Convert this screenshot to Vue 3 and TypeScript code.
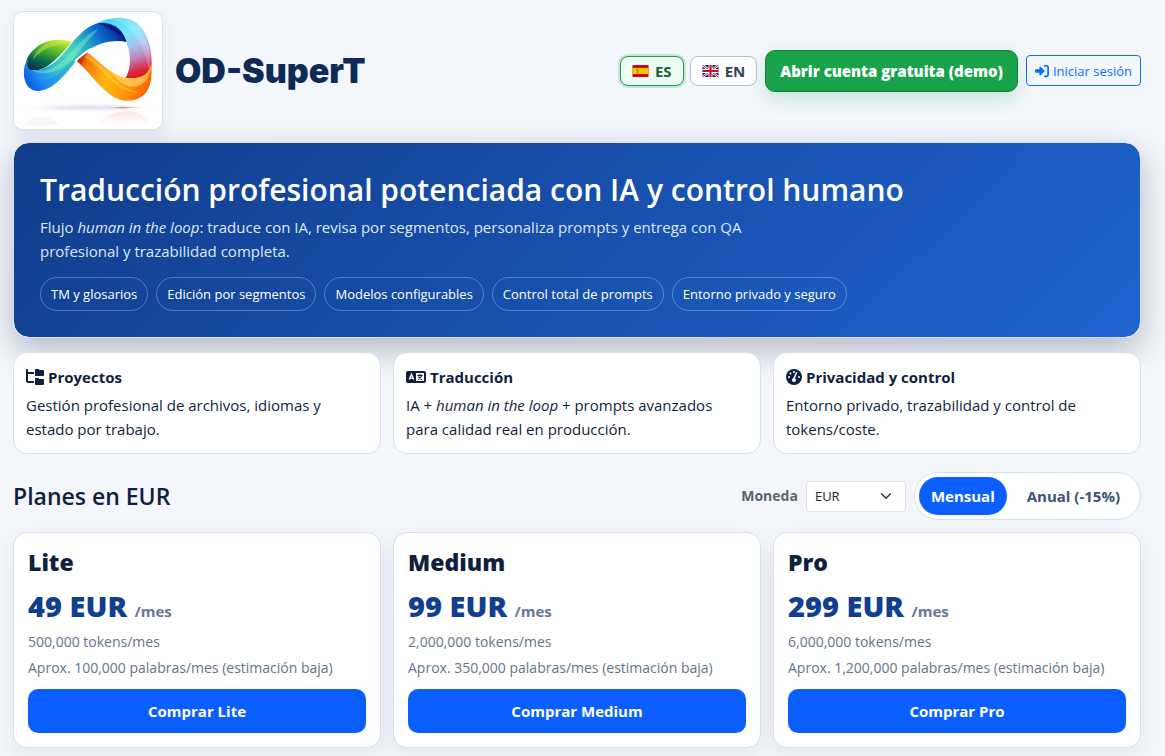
<script setup lang="ts">
import { computed, ref } from 'vue'

type Billing = 'monthly' | 'yearly'

interface Plan {
  name: string
  price: number
  tokens: string
  words: string
}

const lang = ref('es')
const currency = ref('EUR')
const billing = ref<Billing>('monthly')

const chips: string[] = [
  'TM y glosarios',
  'Edición por segmentos',
  'Modelos configurables',
  'Control total de prompts',
  'Entorno privado y seguro',
]

const plans: Plan[] = [
  { name: 'Lite', price: 49, tokens: '500,000', words: '100,000' },
  { name: 'Medium', price: 99, tokens: '2,000,000', words: '350,000' },
  { name: 'Pro', price: 299, tokens: '6,000,000', words: '1,200,000' },
]

const factor = computed(() => (billing.value === 'yearly' ? 0.85 : 1))
const priceOf = (plan: Plan): string => String(Math.round(plan.price * factor.value))
</script>

<template>
  <div class="page">
    <header class="top">
      <div class="brand">
        <div class="logo">
          <svg viewBox="12 12 444 351" role="img" aria-label="OD-SuperT">
            <defs>
              <linearGradient id="leaf" x1="0.75" y1="0" x2="0.2" y2="1">
                <stop offset="0" stop-color="#c8e62c" />
                <stop offset="0.4" stop-color="#3fae35" />
                <stop offset="0.7" stop-color="#0b6a4a" />
                <stop offset="1" stop-color="#032c40" />
              </linearGradient>
              <linearGradient id="wave" gradientUnits="userSpaceOnUse" x1="60" y1="250" x2="330" y2="60">
                <stop offset="0" stop-color="#0a43dc" />
                <stop offset="0.14" stop-color="#1c8ff5" />
                <stop offset="0.34" stop-color="#3ac6c4" />
                <stop offset="0.5" stop-color="#4fdab4" />
                <stop offset="0.66" stop-color="#25acc8" />
                <stop offset="0.82" stop-color="#0c66c8" />
                <stop offset="1" stop-color="#04208c" />
              </linearGradient>
              <linearGradient id="arc" gradientUnits="userSpaceOnUse" x1="330" y1="28" x2="385" y2="212">
                <stop offset="0" stop-color="#4fd6f6" />
                <stop offset="0.25" stop-color="#72e8fd" />
                <stop offset="0.48" stop-color="#a9c3ee" />
                <stop offset="0.68" stop-color="#bf83bd" />
                <stop offset="0.86" stop-color="#dc3048" />
                <stop offset="1" stop-color="#e01010" />
              </linearGradient>
              <linearGradient id="flame" gradientUnits="userSpaceOnUse" x1="200" y1="145" x2="425" y2="240">
                <stop offset="0" stop-color="#d62a05" />
                <stop offset="0.16" stop-color="#f77a08" />
                <stop offset="0.45" stop-color="#fdb813" />
                <stop offset="0.7" stop-color="#ff9a0c" />
                <stop offset="1" stop-color="#fb5a02" />
              </linearGradient>
              <radialGradient id="floor">
                <stop offset="0" stop-color="#a79fc8" stop-opacity="0.4" />
                <stop offset="0.5" stop-color="#b9c0ea" stop-opacity="0.28" />
                <stop offset="1" stop-color="#dde2fa" stop-opacity="0" />
              </radialGradient>
              <radialGradient id="spot">
                <stop offset="0" stop-color="#a13a2a" stop-opacity="0.6" />
                <stop offset="1" stop-color="#e6b0a0" stop-opacity="0" />
              </radialGradient>
              <linearGradient id="mirror" x1="0" y1="0" x2="0" y2="1">
                <stop offset="0" stop-color="#fbdcd2" stop-opacity="0.7" />
                <stop offset="1" stop-color="#fdeee8" stop-opacity="0.2" />
              </linearGradient>
            </defs>
            <ellipse cx="235" cy="299" rx="200" ry="13" fill="url(#floor)" />
            <ellipse cx="340" cy="299" rx="60" ry="4" fill="url(#spot)" />
            <path d="M258 350C290 318 322 309 352 309c34 0 54 14 72 41z" fill="url(#mirror)" />
            <path d="M48 350c14-20 28-26 44-25 24 2 40 12 56 25z" fill="#eef1f9" opacity="0.6" />
            <path d="M185 103C152 91 106 94 78 119 50 140 42 165 55 183c8 7 28 6 46-2 28-14 54-44 84-78z" fill="url(#leaf)" />
            <path d="M180 106c-42-2-86 18-112 50 8-30 34-54 70-58 16-2 30 0 42 8z" fill="#d9f23a" opacity="0.45" />
            <path d="M225 72C262 30 345 12 385 50c30 28 41 76 40 118-2 32-36 48-78 41 18-30 16-72 2-107-14-34-44-60-78-57z" fill="url(#arc)" />
            <path d="M300 34c60 6 104 70 117 156 12-48-2-102-33-140-24-20-56-24-84-16z" fill="#fff" opacity="0.2" />
            <path d="M232 134c34 22 66 66 116 76 44 6 70-10 76-44 6 72-16 112-72 112-60 0-100-74-155-123 12-3 24-11 35-21z" fill="url(#flame)" />
            <path d="M235 138c44 34 74 86 120 106 30 12 48 10 62 0-20 14-54 14-86-8-44-28-68-66-108-90z" fill="#ffe14a" opacity="0.4" />
            <path d="M300 186c18 14 34 22 48 24 44 6 70-10 76-44-2 44-22 66-48 70-36 2-54-20-76-50z" fill="#ffdf70" opacity="0.6" />
            <path d="M232 134l-35 21 20 20c-2-12 4-26 15-41z" fill="#c91c05" opacity="0.6" />
            <path d="M190 98c-34 44-64 80-104 94 38 2 84-34 114-78z" fill="#fff" />
            <path d="M57 148C47 168 52 184 66 187c34 2 66-18 92-48 40-48 72-92 116-94 40-2 66 22 75 57-40-8-86 2-124 32C186 164 144 246 84 249c-36 0-48-42-40-74 3-12 8-20 13-27z" fill="url(#wave)" />
            <path d="M262 46c44-4 76 18 87 56-28-28-50-44-87-56z" fill="#020f75" opacity="0.75" />
            <path d="M66 187c46 10 82-14 116-52 26-28 52-62 84-72-24 24-44 50-70 80-40 46-88 66-130 44z" fill="#8cf5d2" opacity="0.4" />
            <path d="M45 176c4 42 36 54 76 34 36-18 66-54 98-80-40 50-76 114-132 118-32 2-50-26-42-72z" fill="#127bf0" opacity="0.32" />
            <path d="M243 122c-18 10-34 24-48 38" fill="none" stroke="#fff" stroke-width="5" />
          </svg>
        </div>
        <div class="name">OD-SuperT</div>
      </div>
      <nav class="actions" aria-label="Cuenta">
        <button class="lang" :class="{ on: lang === 'es' }" type="button" @click="lang = 'es'">
          <svg class="flag" viewBox="0 0 16 12" aria-hidden="true">
            <path fill="#c60b1e" d="M0 0h16v12H0z" />
            <path fill="#ffc400" d="M0 3h16v6H0z" />
            <path fill="#c67a28" d="M4 4h2v4H4z" />
          </svg>
          ES
        </button>
        <button class="lang" :class="{ on: lang === 'en' }" type="button" @click="lang = 'en'">
          <svg class="flag" viewBox="0 0 16 12" aria-hidden="true">
            <path fill="#012169" d="M0 0h16v12H0z" />
            <path stroke="#fff" stroke-width="2.4" d="M0 0l16 12M16 0L0 12" />
            <path stroke="#c8102e" stroke-width="1" d="M0 0l16 12M16 0L0 12" />
            <path stroke="#fff" stroke-width="4" d="M8 0v12M0 6h16" />
            <path stroke="#c8102e" stroke-width="2.2" d="M8 0v12M0 6h16" />
          </svg>
          EN
        </button>
        <a class="demo" href="#demo">Abrir cuenta gratuita (demo)</a>
        <a class="login" href="#login">
          <svg class="ico" viewBox="0 0 512 512" aria-hidden="true">
            <path d="M217.900 105.900L340.700 228.700c7.200 7.200 11.300 17.100 11.300 27.300s-4.100 20.100-11.300 27.300L217.900 406.100c-6.400 6.400-15 9.900-24 9.900c-18.700 0-33.900-15.200-33.900-33.900l0-62.100L32 320c-17.700 0-32-14.300-32-32l0-64c0-17.700 14.300-32 32-32l128 0 0-62.100c0-18.700 15.200-33.900 33.900-33.900c9 0 17.600 3.600 24 9.900zM352 416l64 0c17.700 0 32-14.300 32-32l0-256c0-17.700-14.300-32-32-32l-64 0c-17.700 0-32-14.300-32-32s14.300-32 32-32l64 0c53 0 96 43 96 96l0 256c0 53-43 96-96 96l-64 0c-17.700 0-32-14.300-32-32s14.300-32 32-32z" />
          </svg>
          Iniciar sesión
        </a>
      </nav>
    </header>

    <section class="hero">
      <h1>Traducción profesional potenciada con IA y control humano</h1>
      <p>
        Flujo <em>human in the loop</em>: traduce con IA, revisa por segmentos, personaliza prompts y entrega con QA
        profesional y trazabilidad completa.
      </p>
      <ul class="chips">
        <li v-for="chip in chips" :key="chip">{{ chip }}</li>
      </ul>
    </section>

    <section class="grid features">
      <article class="feature">
        <h2>
          <svg class="ico tree" viewBox="0 0 576 512" aria-hidden="true">
            <path d="M64 32C64 14.300 49.700 0 32 0S0 14.300 0 32v96V384c0 35.300 28.700 64 64 64H256V384H64V160H256V96H64V32zM288 192c0 17.700 14.300 32 32 32H544c17.700 0 32-14.300 32-32V64c0-17.700-14.300-32-32-32H445.300c-8.500 0-16.600-3.400-22.600-9.400L409.400 9.400c-6-6-14.100-9.400-22.600-9.400H320c-17.700 0-32 14.300-32 32V192zm0 288c0 17.700 14.300 32 32 32H544c17.700 0 32-14.300 32-32V352c0-17.700-14.300-32-32-32H445.300c-8.500 0-16.600-3.400-22.600-9.400l-13.300-13.300c-6-6-14.100-9.400-22.600-9.400H320c-17.700 0-32 14.300-32 32V480z" />
          </svg>
          Proyectos
        </h2>
        <p>Gestión profesional de archivos, idiomas y<br />estado por trabajo.</p>
      </article>
      <article class="feature">
        <h2>
          <svg class="ico wide" viewBox="0 0 640 512" aria-hidden="true">
            <path fill-rule="evenodd" d="M64 64h512c35 0 64 29 64 64v256c0 35-29 64-64 64H64c-35 0-64-29-64-64V128c0-35 29-64 64-64zM320 128v256h256V128z" />
            <path class="cut" d="M104 336l72-164 72 164M130 290h92" />
            <path class="pen" d="M364 204h168M448 166v38M500 204c-16 60-62 110-118 136M398 240c24 44 62 78 118 100" />
          </svg>
          Traducción
        </h2>
        <p>IA + <em>human in the loop</em> + prompts avanzados<br />para calidad real en producción.</p>
      </article>
      <article class="feature">
        <h2>
          <svg class="ico" viewBox="0 0 512 512" aria-hidden="true">
            <circle cx="256" cy="256" r="256" />
            <g class="holes">
              <circle cx="256" cy="96" r="32" />
              <circle cx="144" cy="144" r="32" />
              <circle cx="96" cy="256" r="32" />
              <circle cx="416" cy="256" r="32" />
              <circle cx="256" cy="352" r="64" />
              <path d="M325 98c12-6 26-1 32 11s2 24-3 33l-80 176-44-20 80-180c4-10 8-17 15-20z" />
            </g>
          </svg>
          Privacidad y control
        </h2>
        <p>Entorno privado, trazabilidad y control de<br />tokens/coste.</p>
      </article>
    </section>

    <section class="bar">
      <h2>Planes en {{ currency }}</h2>
      <div class="controls">
        <label for="currency">Moneda</label>
        <div class="select">
          <select id="currency" v-model="currency">
            <option>EUR</option>
            <option>USD</option>
          </select>
          <svg viewBox="0 0 16 16" aria-hidden="true"><path d="M2 5l6 6 6-6" /></svg>
        </div>
        <div class="toggle">
          <button type="button" :class="{ on: billing === 'monthly' }" @click="billing = 'monthly'">Mensual</button>
          <button type="button" :class="{ on: billing === 'yearly' }" @click="billing = 'yearly'">Anual (-15%)</button>
        </div>
      </div>
    </section>

    <section class="grid">
      <article v-for="plan in plans" :key="plan.name" class="plan">
        <h3>{{ plan.name }}</h3>
        <div class="price">{{ priceOf(plan) }} {{ currency }} <small>/mes</small></div>
        <p>{{ plan.tokens }} tokens/mes</p>
        <p>Aprox. {{ plan.words }} palabras/mes (estimación baja)</p>
        <button class="buy" type="button">Comprar {{ plan.name }}</button>
      </article>
    </section>
  </div>
</template>

<style>
body {
  margin: 0;
  background: #f3f6fb;
}
</style>

<style scoped>
.page {
  box-sizing: border-box;
  padding: 11px 24px 24px 13px;
  overflow: hidden;
  color: #0f1f3d;
  font: 15px/24px 'Segoe UI', 'Open Sans', 'Noto Sans', sans-serif;
}
.page * {
  box-sizing: border-box;
}
h1,
h2,
h3,
p,
ul {
  margin: 0;
  padding: 0;
}
button,
select {
  font: inherit;
  cursor: pointer;
}
a {
  text-decoration: none;
}
.top,
.brand,
.actions,
.bar,
.controls {
  display: flex;
  align-items: center;
}
.top,
.bar {
  justify-content: space-between;
}
.brand {
  gap: 12px;
}
.logo {
  width: 150px;
  border: 1px solid #d7e0f0;
  border-radius: 10px;
  background: #fff;
  box-shadow: 0 6px 16px rgba(15, 43, 91, 0.08);
}
.logo svg {
  display: block;
  width: 100%;
}
.name {
  color: #0e2a57;
  font: 900 34px/40px Inter, sans-serif;
}
.actions {
  gap: 8px;
}
.lang {
  display: flex;
  align-items: center;
  gap: 6px;
  height: 30px;
  padding: 0 11px;
  border: 1px solid #b6c0d2;
  border-radius: 8px;
  background: #fff;
  color: #334155;
  font-size: 15px;
  font-weight: 700;
}
.lang + .lang {
  margin-left: -2px;
}
.lang.on {
  border-color: #16a34a;
  background: #ecfdf3;
  color: #166534;
  box-shadow: 0 0 0 2px rgba(22, 163, 74, 0.2);
}
.flag {
  width: 17px;
  height: 12px;
}
.demo {
  padding: 8px 14px;
  border: 1px solid #15803d;
  border-radius: 10px;
  background: #18a34a;
  color: #fff;
  font-weight: 800;
  box-shadow: 0 8px 18px rgba(22, 163, 74, 0.18);
}
.login {
  display: flex;
  align-items: center;
  gap: 4px;
  height: 31px;
  padding: 0 8px;
  border: 1px solid #0d6efd;
  border-radius: 4px;
  color: #0d6efd;
  font-size: 13px;
}
.ico {
  width: 16px;
  height: 16px;
  fill: currentColor;
}
.login .ico {
  width: 14px;
  height: 14px;
}
.hero {
  margin-top: 12px;
  padding: 28px 26px 26px;
  border: 1px solid #d7e0f0;
  border-radius: 16px;
  background: linear-gradient(135deg, #113d8b, #1e63cf) padding-box;
  color: #fff;
  box-shadow: 0 12px 32px rgba(15, 23, 60, 0.27);
}
.hero h1 {
  font-size: 30px;
  font-weight: 600;
  line-height: 38px;
}
.hero p {
  max-width: 740px;
  margin-top: 6px;
  color: #dfe7f5;
  font-weight: 500;
}
.chips {
  display: flex;
  flex-wrap: wrap;
  gap: 8px;
  margin-top: 14px;
  list-style: none;
}
.chips li {
  padding: 5px 10px;
  border: 1px solid rgba(255, 255, 255, 0.28);
  border-radius: 17px;
  font-size: 13px;
  line-height: 22px;
}
.grid {
  display: grid;
  grid-template-columns: repeat(3, minmax(0, 1fr));
  gap: 12px;
}
.features {
  margin-top: 14px;
}
.feature {
  padding: 12px;
  border: 1px solid #d7e0f0;
  border-radius: 14px;
  background: #fff;
}
.feature h2 {
  display: flex;
  align-items: center;
  gap: 4px;
  font-size: 15px;
  font-weight: 700;
  line-height: 24px;
}
.feature p {
  margin-top: 4px;
}
.tree {
  width: 18px;
}
.wide {
  width: 20px;
}
.cut,
.pen {
  fill: none;
  stroke: #fff;
  stroke-width: 44;
}
.pen {
  stroke: currentColor;
  stroke-width: 36;
}
.holes {
  fill: #fff;
}
.bar {
  margin-top: 18px;
}
.bar h2 {
  font-size: 23px;
  font-weight: 600;
  line-height: 32px;
}
.controls {
  gap: 8px;
}
.controls label {
  color: #5b6470;
  font-size: 14px;
  font-weight: 700;
}
.select {
  position: relative;
  width: 100px;
}
.select select {
  width: 100%;
  height: 31px;
  padding: 0 8px;
  border: 1px solid #dee2e6;
  border-radius: 4px;
  appearance: none;
  background: #fff;
  color: #212529;
  font-size: 13px;
}
.select svg {
  position: absolute;
  top: 9px;
  right: 14px;
  width: 12px;
  height: 12px;
  fill: none;
  stroke: #343a40;
  stroke-width: 2;
  stroke-linecap: round;
  stroke-linejoin: round;
  pointer-events: none;
}
.toggle {
  display: flex;
  padding: 4px;
  border: 1px solid #d7e0f0;
  border-radius: 24px;
  background: #fff;
}
.toggle button {
  padding: 7px 12px;
  border: 0;
  border-radius: 19px;
  background: none;
  color: #3b5378;
  font-weight: 700;
}
.toggle button + button {
  padding: 7px 16px 7px 20px;
}
.toggle button.on {
  background: #0b5fff;
  color: #fff;
}
.bar + .grid {
  margin-top: 12px;
}
.plan {
  padding: 13px 14px 14px;
  border: 1px solid #d7e0f0;
  border-radius: 14px;
  background: #fff;
  box-shadow: 0 8px 24px rgba(15, 31, 80, 0.07);
}
.plan h3 {
  font-size: 23px;
  font-weight: 800;
  line-height: 32px;
}
.price {
  margin-top: 12px;
  color: #103e91;
  font-size: 29px;
  font-weight: 800;
  line-height: 32px;
}
.price small {
  color: #64779a;
  font-size: 15px;
  font-weight: 700;
}
.plan p {
  margin-top: 4px;
  color: #64748b;
  font-size: 14px;
  line-height: 22px;
}
.buy {
  width: 100%;
  height: 44px;
  margin-top: 10px;
  border: 0;
  border-radius: 10px;
  background: #0b5fff;
  color: #fff;
  font-weight: 700;
}
</style>
